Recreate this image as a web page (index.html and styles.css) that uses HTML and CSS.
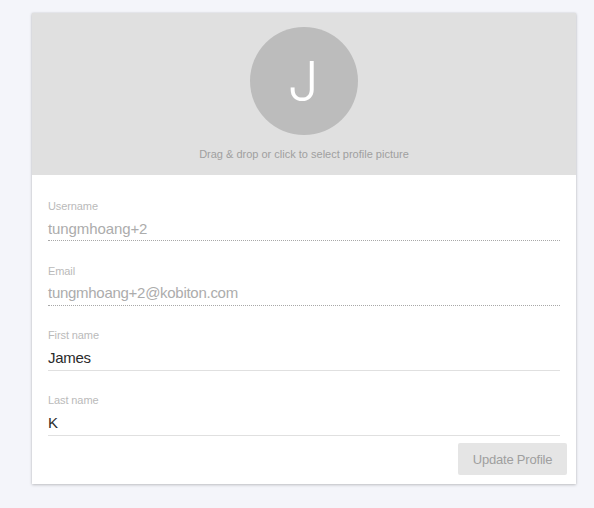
FILE: index.html
```html
<!DOCTYPE html>
<html lang="en">
<head>
<meta charset="utf-8">
<title>Profile</title>
<link rel="stylesheet" href="styles.css">
</head>
<body>
<main class="card">
  <div class="picture">
    <div class="avatar"><span class="initial">J</span></div>
    <p class="hint"><span>Drag &amp; drop or click to select profile picture</span></p>
  </div>
  <form class="form">
    <div class="field disabled"><span class="label">Username</span><span class="value">tungmhoang+2</span></div>
    <div class="field disabled email"><span class="label">Email</span><span class="value">tungmhoang+2@kobiton.com</span></div>
    <div class="field editable"><span class="label">First name</span><span class="value">James</span></div>
    <div class="field editable"><span class="label">Last name</span><span class="value">K</span></div>
    <button class="submit" type="button" disabled>Update Profile</button>
  </form>
</main>
</body>
</html>
```
FILE: styles.css
```css
* { box-sizing: border-box; }
body {
  margin: 0;
  padding: 13px 18px 24px 32px;
  height: 508px;
  overflow: hidden;
  background: #f4f5fa;
  font-family: "Liberation Sans", Arial, sans-serif;
}
.card {
  height: 471px;
  background: #fff;
  box-shadow: 0 1px 3px rgba(0, 0, 0, .2), 0 0 2px rgba(0, 0, 0, .1);
}
.picture {
  height: 162px;
  padding-top: 14px;
  background: #e0e0e0;
  display: flex;
  flex-direction: column;
  align-items: center;
}
.avatar {
  width: 108px;
  height: 108px;
  padding-right: 2px;
  border-radius: 50%;
  background: #bcbcbc;
  display: flex;
  justify-content: center;
  color: #fff;
  font-family: Inter, "Liberation Sans", sans-serif;
  font-weight: 350;
  font-size: 55px;
  line-height: 108px;
}
.hint {
  margin: 12px 0 0;
  font-size: 11px;
  line-height: 14px;
  color: #9f9f9f;
  white-space: nowrap;
}
.form {
  padding: 1px 16px 0;
  display: flex;
  flex-direction: column;
}
.field {
  height: 65px;
  padding-top: 23px;
  border-bottom: 1px solid #e0e0e0;
  display: flex;
  flex-direction: column;
  align-items: flex-start;
}
.label {
  font-size: 11px;
  line-height: 14px;
  letter-spacing: -.1px;
  color: #bababa;
}
.value {
  margin-top: 7px;
  font-size: 15px;
  line-height: 18px;
  letter-spacing: -.1px;
  color: #2b2b2b;
}
.disabled { border-bottom: 1px dotted #a8a8a8; }
.disabled .value { color: #acacac; }
.email .value { margin-top: 6px; letter-spacing: -.28px; }
.editable { padding-top: 22px; }
.editable .value { letter-spacing: -.3px; }
.submit {
  align-self: flex-end;
  margin: 7px -7px 0 0;
  width: 109px;
  height: 32px;
  padding: 2px 0 0;
  border: 0;
  border-radius: 2px;
  background: #e5e5e5;
  color: #9f9f9f;
  font: 13px/30px "Liberation Sans", Arial, sans-serif;
  letter-spacing: -.2px;
}
```
